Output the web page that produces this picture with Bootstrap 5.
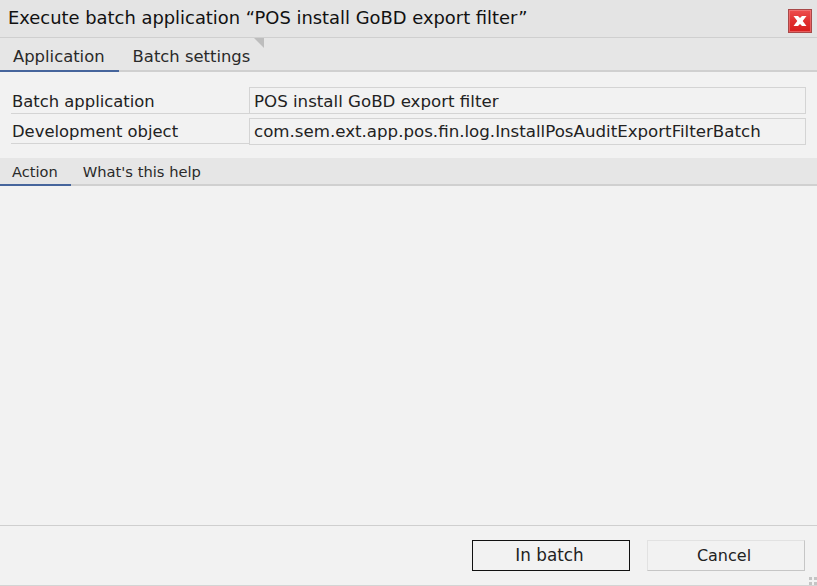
<!DOCTYPE html>
<html lang="en"><head><meta charset="utf-8"><title>Execute batch application</title>
<link href="https://cdn.jsdelivr.net/npm/bootstrap@5.3.0/dist/css/bootstrap.min.css" rel="stylesheet">
<style>
html,body{height:100%}
body{background:#f2f2f2;font-family:"DejaVu Sans",sans-serif;font-size:16.4px;color:#222;overflow:hidden}
.dlg{height:586px}
.ttl{height:38px;background:#e4e4e4;border-bottom:1px solid #cfcfcf;padding:0 5px 0 8px;font-size:17.9px;color:#111}
.cls{width:24px;height:24px;margin-top:4px}
.tabs1{height:34px;background:#e6e6e6;border-bottom:2px solid #d0d0d0;position:relative}
.tb{color:#2a2a2a;margin-bottom:-2px;border-bottom:2px solid transparent}
.tabs1 .tb{padding:7px 14px 0 14px;font-size:16.4px}
.tabs1 .tb.on{padding-left:13px}
.tb.on{border-bottom-color:#46659c}
.fold{position:absolute;left:254px;top:0;width:10px;height:10px;background:#bdbdbd;clip-path:polygon(0 0,100% 0,100% 100%)}
.frm{padding:15px 11px 0 11px}
.rw{height:31px}
.lbl{width:238px;border-bottom:1px solid #d4d4d4;padding:3px 0 0 1px;height:27px}
.val{flex:1;height:27px;border:1px solid #d4d4d4;padding:2px 0 0 4px;font-size:16.65px}
.rw + .rw .lbl{height:26px;padding-top:2px}
.rw + .rw .val{padding-top:1px}
.tabs2{height:28px;margin-top:9px;background:#e6e6e6;border-bottom:2px solid #d0d0d0}
.tabs2 .tb{font-size:14.7px;padding:3px 12px 0 12px}
.tabs2 .tb.on{font-size:14.6px;padding-right:13px}
.grow{flex:1}
.ftr{height:61px;border-top:1px solid #cfcfcf;padding:14px 12px 0 0;gap:17px;position:relative;border-bottom:1px solid #d4d4d4}
.bt{width:158px;height:31px;background:#f2f2f2;font-size:16px;color:#222;padding:1px 4px 0 0;border-radius:0}
.bt.pri{border:1px solid #111;font-size:16.8px;padding-right:3px}
.bt.sec{border:1px solid #e2e2e2;border-right-color:#c6c6c6;border-bottom-color:#c6c6c6}
.grip{position:absolute;right:0;bottom:0;width:8px;height:8px}
</style></head><body>
<div class="dlg d-flex flex-column">
<div class="ttl d-flex align-items-center justify-content-between"><span>Execute batch application “POS install GoBD export filter”</span>
<svg class="cls" viewBox="0 0 24 24"><defs><linearGradient id="g" x1="0" y1="0" x2="0" y2="1"><stop offset="0" stop-color="#ee5050"/><stop offset=".5" stop-color="#e03030"/><stop offset="1" stop-color="#d81c1c"/></linearGradient></defs><rect x=".5" y=".5" width="23" height="23" fill="url(#g)" stroke="#a84848"/><rect x="1.500" y="1.500" width="21" height="21" fill="none" stroke="#f49090" stroke-opacity=".55"/><path d="M5.500 7h4.500l2 2 2-2h4.500l-3.800 5 3.800 5h-4.500l-2-2-2 2h-4.500l3.800-5z" fill="#fff"/></svg></div>
<div class="tabs1 d-flex"><div class="tb on">Application</div><div class="tb">Batch settings</div><span class="fold"></span></div>
<div class="frm">
<div class="rw d-flex"><div class="lbl">Batch application</div><div class="val">POS install GoBD export filter</div></div>
<div class="rw d-flex"><div class="lbl">Development object</div><div class="val">com.sem.ext.app.pos.fin.log.InstallPosAuditExportFilterBatch</div></div>
</div>
<div class="tabs2 d-flex"><div class="tb on">Action</div><div class="tb">What's this help</div></div>
<div class="grow"></div>
<div class="ftr d-flex justify-content-end"><button class="btn bt pri">In batch</button><button class="btn bt sec">Cancel</button>
<svg class="grip" viewBox="0 0 8 8"><g fill="#c4c4c4"><rect x="0" y="0" width="3" height="3"/><rect x="5" y="0" width="3" height="3"/><rect x="0" y="5" width="3" height="3"/><rect x="5" y="5" width="3" height="3"/></g></svg></div>
</div>
<script src="https://cdn.jsdelivr.net/npm/bootstrap@5.3.0/dist/js/bootstrap.bundle.min.js"></script>
</body></html>
